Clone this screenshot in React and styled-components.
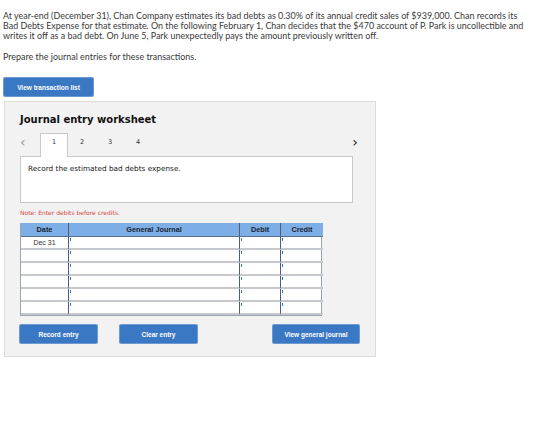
import React from 'react';
import styled, { createGlobalStyle } from 'styled-components';

const GlobalStyle = createGlobalStyle`
	body {
		margin: 0;
		background: #fff;
		font-family: Lato, "Open Sans", sans-serif;
	}
`;

const ROWS = [
	{ date: 'Dec 31' },
	{ date: '' },
	{ date: '' },
	{ date: '' },
	{ date: '' },
	{ date: '' }
];

const App = () => {
	return (
		<Page>
			<GlobalStyle />
			<Intro>
				At year-end (December 31), Chan Company estimates its bad debts as 0.30% of its annual credit
				sales of $939,000. Chan records its
				<br />
				Bad Debts Expense for that estimate. On the following February 1, Chan decides that the $470
				account of P. Park is uncollectible and
				<br />
				writes it off as a bad debt. On June 5, Park unexpectedly pays the amount previously written
				off.
			</Intro>
			<Intro>Prepare the journal entries for these transactions.</Intro>
			<Button width="89px">View transaction list</Button>

			<Panel>
				<Title>Journal entry worksheet</Title>
				<TabRow>
					<Arrow muted>&lsaquo;</Arrow>
					<Tab active>1</Tab>
					<Tab>2</Tab>
					<Tab>3</Tab>
					<Tab>4</Tab>
					<Spacer />
					<Arrow>&rsaquo;</Arrow>
				</TabRow>
				<TaskBox>Record the estimated bad debts expense.</TaskBox>
				<Note>Note: Enter debits before credits.</Note>

				<Table>
					<HeadCell>Date</HeadCell>
					<HeadCell>General Journal</HeadCell>
					<HeadCell>Debit</HeadCell>
					<HeadCell last>Credit</HeadCell>
					{ROWS.map((row, i) => (
						<React.Fragment key={i}>
							<DateCell>{row.date}</DateCell>
							<InputCell />
							<InputCell />
							<InputCell last />
						</React.Fragment>
					))}
				</Table>

				<Actions>
					<Button width="77px">Record entry</Button>
					<Button width="77px">Clear entry</Button>
					<Spacer />
					<Button width="86px">View general journal</Button>
				</Actions>
			</Panel>
		</Page>
	);
};

export default App;

const Page = styled.div`
	padding: 11px 0 0 3px;
	width: 540px;
`;

const Intro = styled.p`
	margin: 0 0 11px;
	font-size: 8.95px;
	line-height: 10px;
	color: #3a3a3a;
	white-space: nowrap;
`;

const Button = styled.div`
	display: flex;
	align-items: center;
	justify-content: center;
	width: ${(p) => p.width};
	height: 18px;
	margin: 16px 0 0 1px;
	background: #3b78c4;
	border-radius: 1px;
	box-shadow: 0 0 0 1px #6d9ad3;
	color: #fff;
	font-family: "Liberation Sans", Arial, sans-serif;
	font-weight: bold;
	font-size: 6.5px;
`;

const Panel = styled.div`
	margin: 5px 0 0 1px;
	width: 355px;
	padding: 8px 0 13px 15px;
	background: #f2f2f2;
	border: 1px solid #dcdcdc;

	${Button} {
		margin: 0;
	}
`;

const Title = styled.div`
	font-family: "DejaVu Sans", Verdana, sans-serif;
	font-weight: bold;
	font-size: 10px;
	color: #111;
	height: 20px;
	line-height: 20px;
`;

const TabRow = styled.div`
	display: flex;
	align-items: stretch;
	height: 23px;
	margin-top: 3px;
	width: 345px;
`;

const Arrow = styled.div`
	width: 20px;
	display: flex;
	justify-content: ${(p) => (p.muted ? 'flex-start' : 'center')};
	box-sizing: border-box;
	padding-top: 1px;
	font-family: "DejaVu Sans", sans-serif;
	font-size: 14px;
	line-height: 16px;
	color: ${(p) => (p.muted ? '#9a9a9a' : '#222')};
`;

const Tab = styled.div`
	width: 28px;
	box-sizing: border-box;
	display: flex;
	justify-content: center;
	padding-top: 4px;
	font-family: "DejaVu Sans", Verdana, sans-serif;
	font-size: 6.5px;
	color: #333;
	background: ${(p) => (p.active ? '#fff' : 'transparent')};
	border: 1px solid ${(p) => (p.active ? '#c9c9c9' : 'transparent')};
	border-bottom: none;
	margin-bottom: -1px;
	position: relative;
	z-index: 1;
`;

const Spacer = styled.div`
	flex: 1;
`;

const TaskBox = styled.div`
	width: 333px;
	height: 47px;
	box-sizing: border-box;
	padding: 7px 7px;
	background: #fff;
	border: 1px solid #c9c9c9;
	font-family: "DejaVu Sans", Verdana, sans-serif;
	font-size: 7.3px;
	color: #222;
`;

const Note = styled.div`
	margin: 6px 0 0;
	height: 14px;
	font-family: "DejaVu Sans", Verdana, sans-serif;
	font-size: 6px;
	color: #d2473e;
`;

const Table = styled.div`
	display: grid;
	grid-template-columns: 48px 171px 41px 42px;
	grid-template-rows: 14px repeat(6, 13px);
	width: 302px;
	box-sizing: border-box;
	border: 1px solid #9aa5b1;
	border-top: none;
	background: #fff;
`;

const HeadCell = styled.div`
	display: flex;
	align-items: center;
	justify-content: center;
	background: #7dafe6;
	border-right: ${(p) => (p.last ? 'none' : '1px solid #4c5f78')};
	border-bottom: 1px solid #5c7390;
	font-family: "Liberation Sans", Arial, sans-serif;
	font-weight: bold;
	font-size: 7.3px;
	color: #1a2330;
`;

const DateCell = styled.div`
	display: flex;
	justify-content: center;
	padding-top: 2px;
	border-right: 1px solid #4c5f78;
	border-bottom: 2px solid #c5c9ce;
	font-family: "Liberation Sans", Arial, sans-serif;
	font-size: 7px;
	color: #333;
`;

const InputCell = styled.div`
	position: relative;
	border-right: ${(p) => (p.last ? 'none' : '1px solid #4c5f78')};
	border-bottom: 2px solid #c5c9ce;

	&::before {
		content: '';
		position: absolute;
		left: 1px;
		top: 1px;
		width: 1px;
		height: 3px;
		background: #3b78c4;
	}
`;

const Actions = styled.div`
	display: flex;
	gap: 23px;
	width: 339px;
	margin-top: 9px;
`;
